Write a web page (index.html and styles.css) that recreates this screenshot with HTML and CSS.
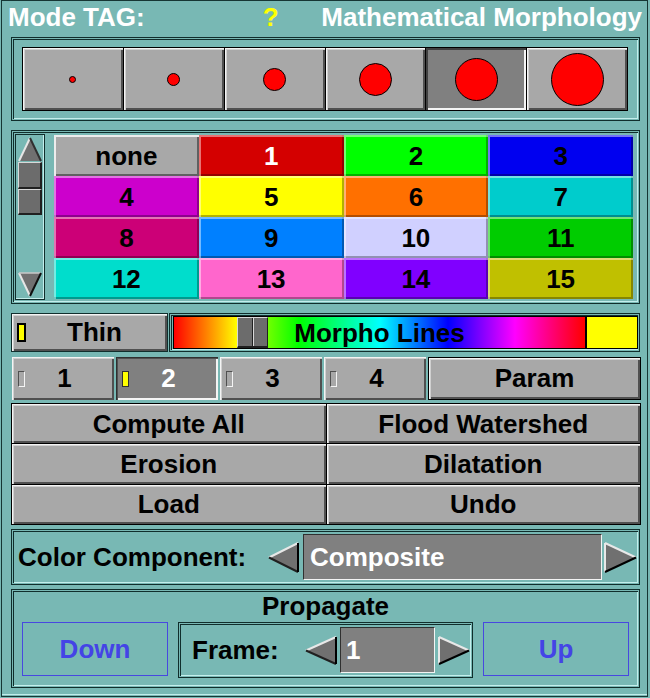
FILE: index.html
```html
<!DOCTYPE html>
<html>
<head>
<meta charset="utf-8">
<title>Mode TAG</title>
<link rel="stylesheet" href="styles.css">
</head>
<body>
<div class="app">
  <header class="title">
    <span>Mode TAG:</span>
    <span class="q">?</span>
    <span class="right">Mathematical Morphology</span>
  </header>

  <section class="frame brush-frame">
    <div class="brushes">
      <div class="brush"><svg width="9" height="9" viewBox="0 0 9 9"><circle cx="4.5" cy="4.5" r="3" fill="#ff0000" stroke="#000" stroke-width="1"/></svg></div>
      <div class="brush"><svg width="15" height="15" viewBox="0 0 15 15"><circle cx="7.5" cy="7.5" r="6" fill="#ff0000" stroke="#000" stroke-width="1"/></svg></div>
      <div class="brush"><svg width="25" height="25" viewBox="0 0 25 25"><circle cx="12.5" cy="12.5" r="11" fill="#ff0000" stroke="#000" stroke-width="1"/></svg></div>
      <div class="brush"><svg width="35" height="35" viewBox="0 0 35 35"><circle cx="17.5" cy="17.5" r="16" fill="#ff0000" stroke="#000" stroke-width="1"/></svg></div>
      <div class="brush sel"><svg width="45" height="45" viewBox="0 0 45 45"><circle cx="22.5" cy="22.5" r="21" fill="#ff0000" stroke="#000" stroke-width="1"/></svg></div>
      <div class="brush"><svg width="55" height="55" viewBox="0 0 55 55"><circle cx="27.5" cy="27.5" r="26" fill="#ff0000" stroke="#000" stroke-width="1"/></svg></div>
    </div>
  </section>

  <section class="frame palette-frame">
    <div class="scrollbar">
      <svg class="sb-arrow" width="24" height="25" viewBox="0 0 24 25">
        <polygon points="12,1 1,24 23,24" fill="#707070"/>
        <line x1="12" y1="1" x2="1" y2="24" stroke="#e6e6e6" stroke-width="2"/>
        <line x1="12" y1="1" x2="23" y2="24" stroke="#303030" stroke-width="2"/>
      </svg>
      <div class="sb-thumb"><span></span><span></span></div>
      <div class="sb-space"></div>
      <svg class="sb-arrow" width="24" height="25" viewBox="0 0 24 25">
        <polygon points="1,1 23,1 12,24" fill="#707070"/>
        <line x1="1" y1="1" x2="12" y2="24" stroke="#e6e6e6" stroke-width="2"/>
        <line x1="1" y1="1" x2="23" y2="1" stroke="#c8c8c8" stroke-width="1.5"/>
        <line x1="23" y1="1" x2="12" y2="24" stroke="#101010" stroke-width="2"/>
      </svg>
    </div>
    <div class="grid">
      <div class="cell c-none">none</div>
      <div class="cell c1">1</div>
      <div class="cell c2">2</div>
      <div class="cell c3">3</div>
      <div class="cell c4">4</div>
      <div class="cell c5">5</div>
      <div class="cell c6">6</div>
      <div class="cell c7">7</div>
      <div class="cell c8">8</div>
      <div class="cell c9">9</div>
      <div class="cell c10">10</div>
      <div class="cell c11">11</div>
      <div class="cell c12">12</div>
      <div class="cell c13">13</div>
      <div class="cell c14">14</div>
      <div class="cell c15">15</div>
    </div>
  </section>

  <div class="lines-row">
    <div class="thin"><span class="ind-big"></span><span class="txt">Thin</span></div>
    <div class="colorbar">
      <div class="gradient"><span class="thumb"></span><span class="label">Morpho Lines</span></div>
      <div class="swatch"></div>
    </div>
  </div>

  <div class="nums">
    <div class="num"><span class="ind"></span><span class="txt">1</span></div>
    <div class="num sel"><span class="ind on"></span><span class="txt">2</span></div>
    <div class="num"><span class="ind"></span><span class="txt">3</span></div>
    <div class="num"><span class="ind"></span><span class="txt">4</span></div>
    <div class="param">Param</div>
  </div>

  <div class="actions">
    <div class="act">Compute All</div>
    <div class="act">Flood Watershed</div>
    <div class="act">Erosion</div>
    <div class="act">Dilatation</div>
    <div class="act">Load</div>
    <div class="act">Undo</div>
  </div>

  <section class="frame comp-frame">
    <span class="comp-label">Color Component:</span>
    <svg class="arrow-l" width="31" height="31" viewBox="0 0 31 31">
      <polygon points="1,15.5 30,1 30,30" fill="#707070"/>
      <line x1="1" y1="15.5" x2="30" y2="1" stroke="#e8e8e8" stroke-width="2"/>
      <line x1="1" y1="15.5" x2="30" y2="30" stroke="#202020" stroke-width="2"/>
      <line x1="30" y1="1" x2="30" y2="30" stroke="#000" stroke-width="2"/>
    </svg>
    <div class="field comp-field">Composite</div>
    <svg class="arrow-r" width="33" height="31" viewBox="0 0 33 31">
      <polygon points="1,1 32,15.5 1,30" fill="#707070"/>
      <line x1="1" y1="1" x2="1" y2="30" stroke="#e8e8e8" stroke-width="2"/>
      <line x1="1" y1="1" x2="32" y2="15.5" stroke="#e8e8e8" stroke-width="2"/>
      <line x1="1" y1="30" x2="32" y2="15.5" stroke="#000" stroke-width="2"/>
    </svg>
  </section>

  <section class="frame prop-frame">
    <div class="prop-title">Propagate</div>
    <div class="prop-row">
      <div class="link-btn">Down</div>
      <div class="frame-box">
        <span class="frame-label">Frame:</span>
        <svg class="arrow-l2" width="32" height="29" viewBox="0 0 32 29">
          <polygon points="1,14.5 31,1 31,28" fill="#707070"/>
          <line x1="1" y1="14.5" x2="31" y2="1" stroke="#e8e8e8" stroke-width="2"/>
          <line x1="1" y1="14.5" x2="31" y2="28" stroke="#202020" stroke-width="2"/>
          <line x1="31" y1="1" x2="31" y2="28" stroke="#000" stroke-width="2"/>
        </svg>
        <div class="field frame-field">1</div>
        <svg class="arrow-r2" width="32" height="29" viewBox="0 0 32 29">
          <polygon points="1,1 31,14.5 1,28" fill="#707070"/>
          <line x1="1" y1="1" x2="1" y2="28" stroke="#e8e8e8" stroke-width="2"/>
          <line x1="1" y1="1" x2="31" y2="14.5" stroke="#e8e8e8" stroke-width="2"/>
          <line x1="1" y1="28" x2="31" y2="14.5" stroke="#000" stroke-width="2"/>
        </svg>
      </div>
      <div class="link-btn">Up</div>
    </div>
  </section>
</div>
</body>
</html>
```

FILE: styles.css
```css
* { box-sizing: border-box; }
html, body { margin: 0; padding: 0; }
body {
  width: 650px;
  height: 698px;
  overflow: hidden;
  background: #78b8b4;
  font-family: "Liberation Sans", Arial, sans-serif;
  font-weight: bold;
  font-size: 26px;
  color: #000;
}

.app {
  margin-left: 1px;
  width: 647px;
  height: 697px;
  border: 1px solid #163634;
  box-shadow: inset 0 -1px 0 #78b8b4, inset 0 -2px 0 #c2ecea;
  display: flex;
  flex-direction: column;
}

/* title */
.title {
  height: 36px;
  display: flex;
  align-items: flex-start;
  padding: 2px 5px 0 6px;
  color: #fff;
  line-height: 29px;
}
.title .q { color: #ffff00; margin-left: 118px; }
.title .right { margin-left: auto; }

/* etched frame */
.frame {
  margin-left: 9px;
  width: 629px;
  border: 1px solid #102e2c;
  box-shadow:
    inset 1px 1px 0 #78b8b4,
    inset -1px -1px 0 #78b8b4,
    inset 2px 2px 0 #102e2c,
    inset -2px -2px 0 #c4eeec;
}

/* brushes */
.brush-frame {
  height: 84px;
  padding: 9px 11px 9px 10px;
}
.brushes {
  height: 64px;
  display: grid;
  grid-template-columns: repeat(6, 1fr);
  gap: 1px;
  background: #000;
  border: 1px solid #000;
}
.brush {
  background: #a8a8a8;
  box-shadow: inset 1px 1px 0 #f4f4f4, inset 2px 2px 0 #d0d0d0, inset -2px -2px 0 #505050;
  display: flex;
  align-items: center;
  justify-content: center;
}
.brush.sel {
  background: #808080;
  box-shadow: inset 2px 2px 0 #404040, inset -2px -2px 0 #f4f4f4;
}
.brush svg { display: block; }

/* palette */
.palette-frame {
  margin-top: 9px;
  height: 174px;
  display: flex;
  align-items: flex-start;
  gap: 9px;
  padding: 3px 6px 3px 3px;
}
.scrollbar {
  width: 30px;
  height: 166px;
  border: 1px solid #102e2c;
  box-shadow: inset -1px -1px 0 #c4eeec;
  padding: 2px 2px 2px 2px;
  display: flex;
  flex-direction: column;
}
.sb-arrow { display: block; flex: none; }
.sb-thumb {
  height: 53px;
  display: flex;
  flex-direction: column;
  flex: none;
}
.sb-thumb span {
  flex: 1;
  background: #6c6c6c;
  border-top: 1px solid #d8d8d8;
  border-left: 1px solid #d8d8d8;
  border-bottom: 2px solid #202020;
  border-right: 2px solid #202020;
}
.sb-space { flex: 1; }

.grid {
  width: 579px;
  height: 164px;
  margin-top: 1px;
  display: grid;
  grid-template-columns: repeat(4, 1fr);
  grid-template-rows: repeat(4, 1fr);
}
.cell {
  display: flex;
  align-items: center;
  justify-content: center;
  line-height: 1;
  box-shadow: inset 2px 2px 0 rgba(255, 255, 255, 0.45), inset -2px -2px 0 rgba(0, 0, 0, 0.3);
}
.c-none { background: #a8a8a8; box-shadow: inset 2px 2px 0 #ececec, inset -2px -2px 0 #606060; }
.c1 { background: #d40000; color: #fff; }
.c2 { background: #00ff00; }
.c3 { background: #0000f0; }
.c4 { background: #cc00cc; }
.c5 { background: #ffff00; }
.c6 { background: #ff7000; }
.c7 { background: #00cccc; }
.c8 { background: #cc0077; }
.c9 { background: #0080ff; }
.c10 { background: #d0d0ff; }
.c11 { background: #00cc00; }
.c12 { background: #00ddcc; }
.c13 { background: #ff66cc; }
.c14 { background: #8000ff; }
.c15 { background: #c0c000; }

/* thin / morpho lines */
.lines-row {
  margin: 9px 0 0 9px;
  width: 629px;
  height: 39px;
  display: flex;
  gap: 1px;
}
.thin {
  width: 157px;
  border: 1px solid #102e2c;
  background: #a8a8a8;
  box-shadow: inset 1px 1px 0 #f4f4f4, inset 2px 2px 0 #d0d0d0, inset -2px -2px 0 #505050;
  display: flex;
  align-items: center;
}
.ind-big {
  width: 9px;
  height: 19px;
  margin-left: 5px;
  background: #ffff00;
  border: 2px solid #000;
  flex: none;
}
.thin .txt { flex: 1; text-align: center; padding-right: 4px; }

.colorbar {
  flex: 1;
  display: flex;
  border: 1px solid #102e2c;
  box-shadow:
    inset 1px 1px 0 #78b8b4,
    inset -1px -1px 0 #78b8b4,
    inset 2px 2px 0 #102e2c,
    inset -2px -2px 0 #c4eeec;
  padding: 2px 1px 2px 3px;
}
.gradient {
  flex: 1;
  position: relative;
  border: 1px solid #000;
  display: flex;
  align-items: center;
  justify-content: center;
  background: linear-gradient(to right,
    #ff0000 0px, #ff8000 32px, #ffff00 63px, #70ff00 94px, #00ff00 125px,
    #00ff80 165px, #00ffff 206px, #0080ff 240px, #0000ff 274px,
    #8000ff 307px, #ff00ff 341px, #ff0080 375px, #ff0000 410px);
}
.thumb {
  position: absolute;
  left: 63px;
  top: 0;
  bottom: 0;
  width: 31px;
  background:
    linear-gradient(to right, transparent 14px, #202020 14px, #202020 15px, #d8d8d8 15px, #d8d8d8 16px, transparent 16px),
    #6c6c6c;
  border-top: 1px solid #d8d8d8;
  border-left: 1px solid #d8d8d8;
  border-bottom: 2px solid #202020;
  border-right: 1px solid #202020;
}
.label { line-height: 1; }
.swatch {
  width: 52px;
  border: 1px solid #000;
  background: #ffff00;
}

/* numbers */
.nums {
  margin: 5px 0 0 10px;
  width: 629px;
  height: 43px;
  display: grid;
  grid-template-columns: repeat(4, 102px) 1fr;
  gap: 2px;
}
.num {
  background: #a8a8a8;
  box-shadow: inset 1px 1px 0 #f4f4f4, inset 2px 2px 0 #d0d0d0, inset -2px -2px 0 #505050;
  display: flex;
  align-items: center;
}
.num.sel {
  background: #808080;
  color: #fff;
  box-shadow: inset 1px 1px 0 #303030, inset 2px 2px 0 #505050, inset -2px -2px 0 #f4f4f4;
}
.num .txt { flex: 1; text-align: center; padding-right: 10px; }
.ind {
  flex: none;
  width: 7px;
  height: 16px;
  margin-left: 6px;
  background: #a8a8a8;
  border: 1px solid #f4f4f4;
  border-left-color: #505050;
  border-top-color: #505050;
}
.ind.on { background: #ffff00; border-color: #303030; }
.param {
  border: 1px solid #000;
  background: #a8a8a8;
  box-shadow: inset 1px 1px 0 #f4f4f4, inset 2px 2px 0 #d0d0d0, inset -2px -2px 0 #505050;
  display: flex;
  align-items: center;
  justify-content: center;
}

/* actions */
.actions {
  margin: 3px 0 0 9px;
  width: 630px;
  height: 122px;
  display: grid;
  grid-template-columns: 1fr 1fr;
  grid-template-rows: repeat(3, 1fr);
  gap: 1px;
  background: #000;
  border: 1px solid #000;
}
.act {
  background: #a8a8a8;
  box-shadow: inset 1px 1px 0 #f4f4f4, inset 2px 2px 0 #d0d0d0, inset -2px -2px 0 #505050;
  display: flex;
  align-items: center;
  justify-content: center;
  line-height: 1;
}

/* color component */
.comp-frame {
  margin-top: 4px;
  height: 56px;
  display: flex;
  align-items: center;
  padding: 0 2px 0 6px;
}
.arrow-l { margin-left: auto; flex: none; display: block; }
.arrow-r { margin-left: 2px; flex: none; display: block; }
.field {
  background: #808080;
  color: #fff;
  border-top: 1px solid #303030;
  border-left: 1px solid #303030;
  border-bottom: 1px solid #f4f4f4;
  border-right: 1px solid #f4f4f4;
  display: flex;
  align-items: center;
}
.comp-field {
  width: 299px;
  height: 46px;
  margin-left: 4px;
  padding-left: 6px;
}

/* propagate */
.prop-frame {
  margin-top: 4px;
  height: 99px;
  padding: 2px 10px 0 10px;
}
.prop-title {
  text-align: center;
  line-height: 29px;
  height: 29px;
}
.prop-row {
  margin-top: 1px;
  display: flex;
  align-items: flex-start;
  gap: 10px;
}
.link-btn {
  width: 146px;
  height: 54px;
  border: 1px solid #4848e0;
  color: #4444e6;
  display: flex;
  align-items: center;
  justify-content: center;
}
.frame-box {
  width: 295px;
  height: 56px;
  display: flex;
  align-items: center;
  padding: 0 2px 0 13px;
  border: 1px solid #102e2c;
  box-shadow:
    inset 1px 1px 0 #78b8b4,
    inset -1px -1px 0 #78b8b4,
    inset 2px 2px 0 #102e2c,
    inset -2px -2px 0 #c4eeec;
}
.arrow-l2 { margin-left: auto; flex: none; display: block; }
.arrow-r2 { margin-left: 3px; flex: none; display: block; }
.frame-field {
  width: 95px;
  height: 46px;
  margin-left: 3px;
  padding-left: 5px;
}
```
